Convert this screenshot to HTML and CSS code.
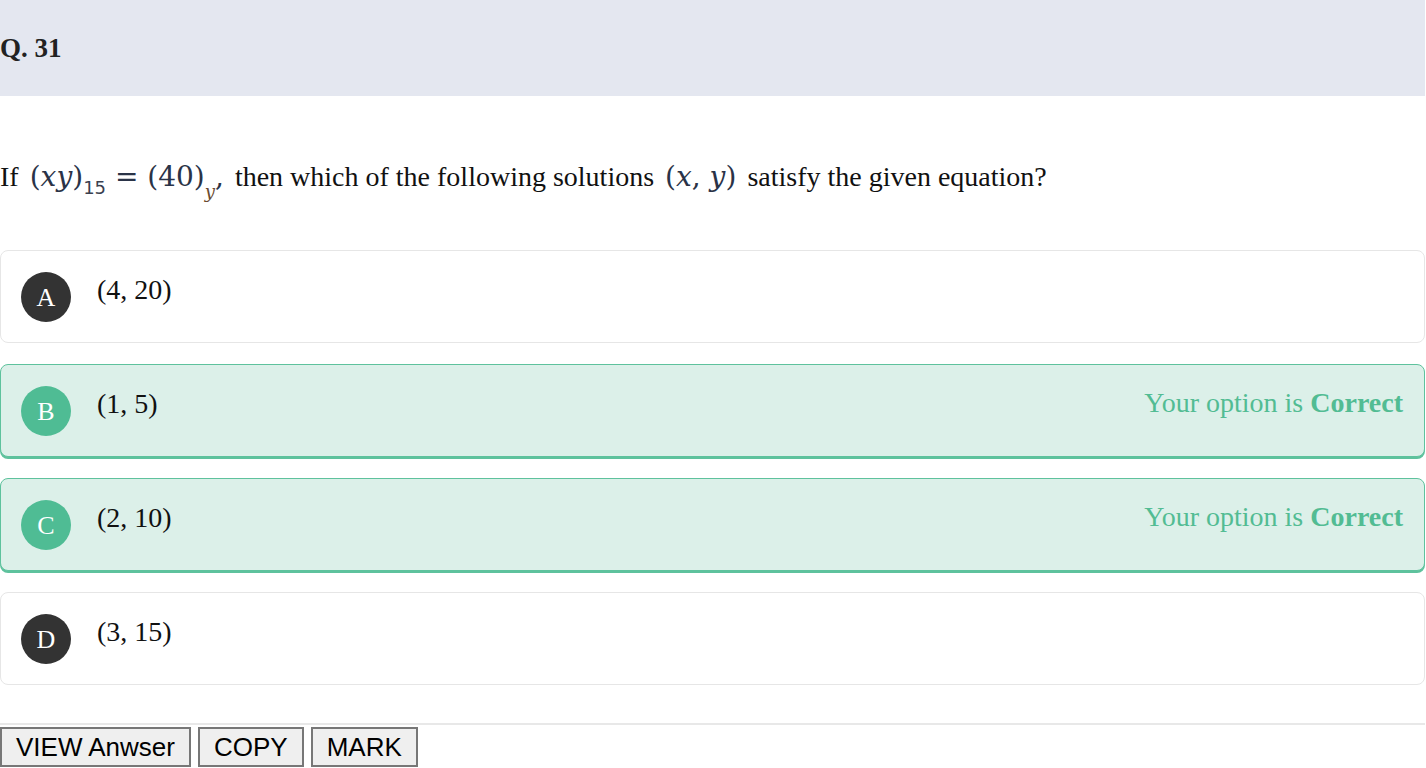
FILE: index.html
```html
<!DOCTYPE html>
<html>
<head>
<meta charset="utf-8">
<link rel="stylesheet" href="styles.css">
</head>
<body>
<div class="page">
  <header class="qhead">Q. 31</header>
  <p class="question">If <span class="math">(<i>xy</i>)<sub>15</sub> = (40)<sub class="suby"><i>y</i></sub>,</span> then which of the following solutions <span class="math">(<i>x</i>, <i>y</i>)</span> satisfy the given equation?</p>
  <div class="options">
    <div class="option">
      <span class="badge">A</span>
      <span class="label">(4, 20)</span>
    </div>
    <div class="option correct">
      <span class="badge">B</span>
      <span class="label">(1, 5)</span>
      <span class="status">Your option is <b>Correct</b></span>
    </div>
    <div class="option correct">
      <span class="badge">C</span>
      <span class="label">(2, 10)</span>
      <span class="status">Your option is <b>Correct</b></span>
    </div>
    <div class="option">
      <span class="badge">D</span>
      <span class="label">(3, 15)</span>
    </div>
  </div>
  <div class="actions">
    <button class="btn">VIEW Anwser</button>
    <button class="btn">COPY</button>
    <button class="btn">MARK</button>
  </div>
</div>
</body>
</html>
```
FILE: styles.css
```css
html, body {
  margin: 0;
  padding: 0;
  background: #ffffff;
}
body {
  font-family: "Liberation Serif", "Times New Roman", serif;
  color: #111;
}
.page {
  width: 1425px;
}
.qhead {
  background: #e4e7f0;
  height: 96px;
  box-sizing: border-box;
  padding-top: 31px;
  font-size: 27px;
  font-weight: bold;
  line-height: 34px;
  color: #222;
}
.question {
  margin: 0;
  box-sizing: border-box;
  height: 154px;
  padding-top: 61px;
  font-size: 28px;
  line-height: 40px;
}
.math {
  font-family: "DejaVu Serif", serif;
  color: #2a3347;
  font-size: 28px;
  margin: 0 4px;
}
.math i {
  font-style: italic;
}
.math sub {
  font-family: "DejaVu Sans", sans-serif;
  font-size: 18px;
  vertical-align: -8px;
  line-height: 0;
  color: #3a3f4f;
}
.math sub.suby {
  font-family: "DejaVu Serif", serif;
  font-size: 18px;
  vertical-align: -12px;
  color: #6a4a30;
}
.options {
  display: flex;
  flex-direction: column;
  gap: 21px;
}
.option {
  display: flex;
  align-items: flex-start;
  box-sizing: border-box;
  height: 93px;
  border: 1px solid #e6e6e6;
  border-radius: 8px;
  padding: 20px 20px 0 20px;
  background: #fff;
}
.badge {
  flex: none;
  width: 50px;
  height: 50px;
  margin-top: 1px;
  border-radius: 50%;
  background: #333333;
  color: #fff;
  display: flex;
  align-items: center;
  justify-content: center;
  font-size: 26px;
  padding-top: 1px;
  box-sizing: border-box;
}
.label {
  margin-left: 26px;
  font-size: 28px;
  line-height: 28px;
  margin-top: 5px;
}
.option.correct {
  background: #dcf0e9;
  border: 1px solid #5ec29d;
  box-shadow: 0 2px 0 0 #5ec29d;
}
.option.correct .badge {
  background: #4fbc94;
}
.status {
  margin-left: auto;
  font-size: 28px;
  line-height: 28px;
  margin-top: 4px;
  color: #52bc93;
  margin-right: 1px;
}
.status b {
  font-weight: bold;
}
.actions {
  margin-top: 38px;
  border-top: 2px solid #e8e8e8;
  padding-top: 2px;
  display: flex;
  gap: 7px;
}
.btn {
  font-family: "Liberation Sans", Arial, sans-serif;
  font-size: 26px;
  color: #000;
  background: #efefef;
  border: 2px solid #777;
  padding: 1px 14px;
  height: 40px;
  line-height: 30px;
  border-radius: 0;
}
```
